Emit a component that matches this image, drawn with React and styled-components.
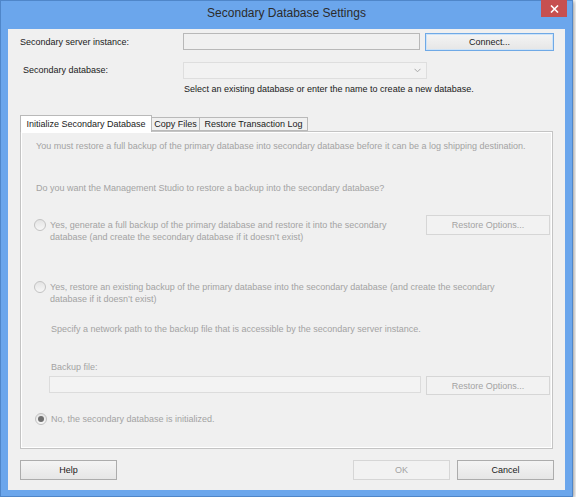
import React from "react";
import styled, { createGlobalStyle } from "styled-components";

const GlobalStyle = createGlobalStyle`
  html, body {
    margin: 0;
    padding: 0;
    background: #ffffff;
  }
  body {
    font-family: "Liberation Sans", Arial, sans-serif;
    font-size: 9px;
    color: #1a1a1a;
  }
  * {
    box-sizing: border-box;
  }
`;

// Outer window frame
const Window = styled.div`
  width: 573px;
  height: 497px;
  display: flex;
  flex-direction: column;
  padding: 0 7px 6px 7px;
  background: #6ba6ec;
  border: 1px solid #4f86c9;
  box-shadow: 1px 1px 4px rgba(0, 0, 0, 0.45);
`;

const TitleBar = styled.div`
  position: relative;
  height: 28px;
  display: flex;
  align-items: center;
  justify-content: center;
  padding-bottom: 4px;
  font-size: 12px;
  color: #2b2b2b;
`;

const CloseButton = styled.div`
  position: absolute;
  top: -1px;
  right: -2px;
  width: 26px;
  height: 17px;
  display: flex;
  align-items: center;
  justify-content: center;
  background: #c75050;
`;

const Client = styled.div`
  flex: 1;
  display: flex;
  flex-direction: column;
  padding: 4px 11px 10px 12px;
  background: #f0f0f0;
`;

const FieldRow = styled.div`
  display: flex;
  align-items: flex-start;
  margin-top: ${(p) => p.$mt || 0}px;
`;

const Label = styled.div`
  width: 163px;
  padding-left: ${(p) => p.$indent || 0}px;
  line-height: ${(p) => p.$h || 18}px;
  color: #1a1a1a;
`;

const TextBox = styled.div`
  width: ${(p) => p.$w}px;
  height: 17px;
  margin-left: ${(p) => p.$ml || 0}px;
  border: 1px solid ${(p) => (p.$light ? "#dcdcdc" : "#b8b8b8")};
  background: ${(p) => (p.$light ? "#f3f3f3" : "#f0f0f0")};
`;

const ComboBox = styled.div`
  width: 244px;
  height: 17px;
  display: flex;
  align-items: center;
  justify-content: flex-end;
  padding-right: 5px;
  border: 1px solid #dedede;
  background: #f2f2f2;
`;

const Hint = styled.div`
  margin: 4px 0 0 164px;
  line-height: 12px;
  color: #1a1a1a;
`;

const Button = styled.button`
  width: ${(p) => p.$w || 97}px;
  height: ${(p) => p.$h || 20}px;
  margin-left: ${(p) => p.$ml || 0}px;
  padding: 0;
  font-family: inherit;
  font-size: 9px;
  color: ${(p) => (p.disabled ? "#a3a3a3" : "#1a1a1a")};
  border: 1px solid
    ${(p) => (p.$default ? "#6fa9e6" : p.disabled ? "#d6d6d6" : "#acacac")};
  background: ${(p) =>
    p.disabled
      ? "#f2f2f2"
      : "linear-gradient(#f4f4f4, #e6e6e6)"};
  box-shadow: ${(p) => (p.$default ? "inset 0 0 0 1px #cde3f8" : "none")};
`;

const TabStrip = styled.div`
  display: flex;
  align-items: flex-end;
  height: 16px;
  margin-top: 20px;
`;

const Tab = styled.div`
  position: relative;
  z-index: ${(p) => (p.$active ? 1 : 0)};
  width: ${(p) => p.$w}px;
  height: ${(p) => (p.$active ? 17 : 14)}px;
  margin-bottom: ${(p) => (p.$active ? -1 : 0)}px;
  margin-left: ${(p) => (p.$active ? 0 : -1)}px;
  display: flex;
  align-items: center;
  justify-content: center;
  border: 1px solid #b9b9b9;
  border-bottom: ${(p) => (p.$active ? "none" : "1px solid #b9b9b9")};
  background: ${(p) => (p.$active ? "#ffffff" : "#f0f0f0")};
  color: #1a1a1a;
`;

const Panel = styled.div`
  width: 533px;
  height: 318px;
  display: flex;
  flex-direction: column;
  padding: 8px 2px 0 13px;
  border: 1px solid #c4c4c4;
  box-shadow: inset 1px 1px 0 #ffffff, inset -1px -1px 0 #ffffff;
  background: #f0f0f0;
`;

const Muted = styled.div`
  margin-top: ${(p) => p.$mt || 0}px;
  margin-left: ${(p) => p.$ml || 0}px;
  line-height: 12px;
  color: #a3a3a3;
  white-space: nowrap;
`;

const OptionRow = styled.div`
  display: flex;
  justify-content: space-between;
  align-items: flex-start;
  margin-top: ${(p) => p.$mt || 0}px;
`;

const RadioOption = styled.div`
  display: flex;
  align-items: flex-start;
  gap: 4px;
  margin-top: ${(p) => p.$mt || 0}px;
  margin-left: ${(p) => p.$ml || 0}px;
`;

const Radio = styled.span`
  flex: none;
  width: 12px;
  height: 12px;
  display: flex;
  align-items: center;
  justify-content: center;
  border-radius: 50%;
  border: 1px solid #c2c2c2;
  background: linear-gradient(#e4e4e4, #f7f7f7);
  &::after {
    content: "";
    width: 6px;
    height: 6px;
    border-radius: 50%;
    background: ${(p) => (p.$checked ? "#6e6e6e" : "transparent")};
  }
`;

const Footer = styled.div`
  display: flex;
  margin-top: 11px;
`;

const Spacer = styled.div`
  flex: 1;
`;

const Chevron = () => (
  <svg width="7" height="5" viewBox="0 0 7 5">
    <path d="M0.5 0.8 L3.5 3.8 L6.5 0.8" fill="none" stroke="#a8a8a8" strokeWidth="1" />
  </svg>
);

const CloseGlyph = () => (
  <svg width="9" height="8" viewBox="0 0 9 8">
    <path d="M1 0.5 L8 7.5 M8 0.5 L1 7.5" stroke="#ffffff" strokeWidth="1.6" />
  </svg>
);

const App = () => {
  return (
    <>
      <GlobalStyle />
      <Window>
        <TitleBar>
          Secondary Database Settings
          <CloseButton>
            <CloseGlyph />
          </CloseButton>
        </TitleBar>
        <Client>
          <FieldRow>
            <Label>Secondary server instance:</Label>
            <TextBox $w={237} />
            <Button $w={129} $h={18} $ml={5} $default>
              Connect...
            </Button>
          </FieldRow>
          <FieldRow $mt={11}>
            <Label $indent={3} $h={17}>
              Secondary database:
            </Label>
            <ComboBox>
              <Chevron />
            </ComboBox>
          </FieldRow>
          <Hint>
            Select an existing database or enter the name to create a new
            database.
          </Hint>

          <TabStrip>
            <Tab $active $w={132}>
              Initialize Secondary Database
            </Tab>
            <Tab $w={49}>Copy Files</Tab>
            <Tab $w={109}>Restore Transaction Log</Tab>
          </TabStrip>
          <Panel>
            <Muted $ml={2}>
              You must restore a full backup of the primary database into
              secondary database before it can be a log shipping destination.
            </Muted>
            <Muted $ml={2} $mt={30}>
              Do you want the Management Studio to restore a backup into the
              secondary database?
            </Muted>

            <OptionRow $mt={21}>
              <RadioOption $mt={4}>
                <Radio />
                <Muted>
                  Yes, generate a full backup of the primary database and
                  restore it into the secondary
                  <br />
                  database (and create the secondary database if it doesn’t
                  exist)
                </Muted>
              </RadioOption>
              <Button $w={124} disabled>
                Restore Options...
              </Button>
            </OptionRow>

            <OptionRow $mt={38}>
              <RadioOption>
                <Radio />
                <Muted>
                  Yes, restore an existing backup of the primary database into
                  the secondary database (and create the secondary
                  <br />
                  database if it doesn’t exist)
                </Muted>
              </RadioOption>
            </OptionRow>

            <Muted $ml={17} $mt={18}>
              Specify a network path to the backup file that is accessible by
              the secondary server instance.
            </Muted>
            <Muted $ml={17} $mt={26}>
              Backup file:
            </Muted>
            <OptionRow $mt={3}>
              <TextBox $w={372} $ml={15} $light />
              <Button $w={124} $h={19} disabled>
                Restore Options...
              </Button>
            </OptionRow>

            <RadioOption $mt={18} $ml={1}>
              <Radio $checked />
              <Muted>No, the secondary database is initialized.</Muted>
            </RadioOption>
          </Panel>

          <Footer>
            <Button>Help</Button>
            <Spacer />
            <Button disabled>OK</Button>
            <Button $ml={7}>Cancel</Button>
          </Footer>
        </Client>
      </Window>
    </>
  );
};

export default App;
